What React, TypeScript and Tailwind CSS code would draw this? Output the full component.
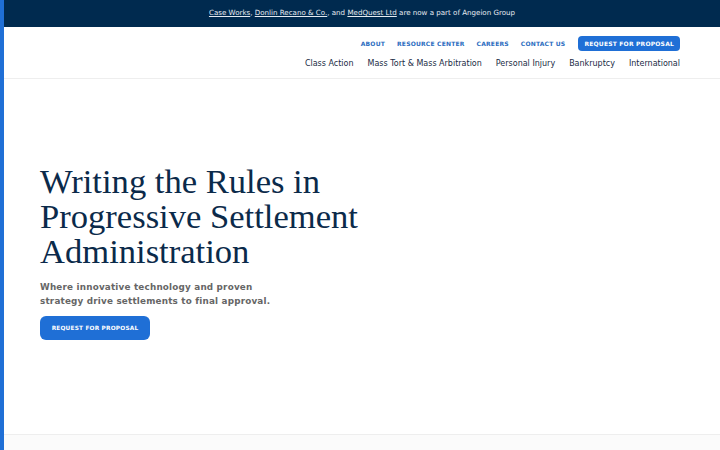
import React from "react";

const sans = { fontFamily: '"DejaVu Sans", sans-serif' };
const serif = { fontFamily: '"Liberation Serif", serif' };

export default function App() {
  const utility = ["ABOUT", "RESOURCE CENTER", "CAREERS", "CONTACT US"];
  const main = ["Class Action", "Mass Tort & Mass Arbitration", "Personal Injury", "Bankruptcy", "International"];
  return (
    <div className="w-[720px] h-[450px] overflow-hidden bg-white border-l-4 border-[#1f6fd6]" style={sans}>
      <div className="h-[27px] bg-[#002a4f] flex items-center justify-center text-[7.1px] text-[#e6ebf1]">
        <span>
          <span className="underline">Case Works</span>, <span className="underline">Donlin Recano &amp; Co.</span>, and{" "}
          <span className="underline">MedQuest Ltd</span> are now a part of Angeion Group
        </span>
      </div>
      <header className="h-[52px] border-b border-[#eeeeee] flex flex-col items-end pr-[40px]">
        <div className="flex items-center gap-[12px] mt-[9px]">
          {utility.map((u) => (
            <span key={u} className="text-[6px] font-bold text-[#2a6cc0] tracking-[0.2px]">
              {u}
            </span>
          ))}
          <span className="h-[15px] px-[6px] ml-[1px] flex items-center rounded-[4px] bg-[#1f6fd6] text-white text-[6px] font-bold tracking-[0.2px]">
            REQUEST FOR PROPOSAL
          </span>
        </div>
        <nav className="flex items-center gap-[14px] mt-[7px] text-[8px] text-[#1a2b45]">
          {main.map((m) => (
            <span key={m}>{m}</span>
          ))}
        </nav>
      </header>
      <section className="h-[356px] border-b border-[#eeeeee] pl-[36px] pt-[85px]">
        <h1 className="text-[34.6px] leading-[35px] text-[#0b2a4a]" style={serif}>
          Writing the Rules in
          <br />
          Progressive Settlement
          <br />
          Administration
        </h1>
        <p className="mt-[11px] text-[8.8px] leading-[14px] font-bold text-[#666666] tracking-[0.2px]">
          Where innovative technology and proven
          <br />
          strategy drive settlements to final approval.
        </p>
        <div className="mt-[8px] w-[110px] h-[24px] rounded-[6px] bg-[#1f6fd6] flex items-center justify-center text-white text-[5.8px] font-bold tracking-[0.2px]">
          REQUEST FOR PROPOSAL
        </div>
      </section>
      <div className="h-[20px] bg-[#fbfbfb]" />
    </div>
  );
}
